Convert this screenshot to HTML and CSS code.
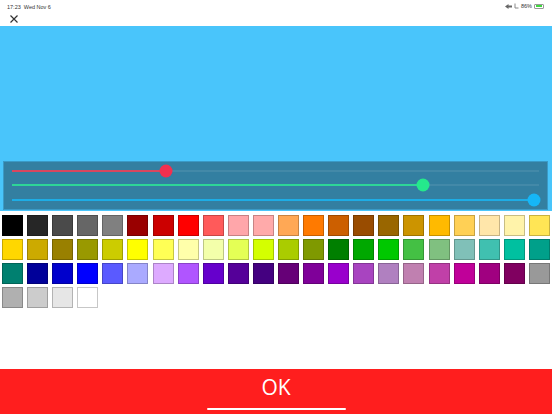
FILE: index.html
```
<!DOCTYPE html>
<html>
<head>
<meta charset="utf-8">
<link rel="stylesheet" href="styles.css">
</head>
<body>
<div class="app">
  <div class="status">
    <span class="time">17:23&nbsp;&nbsp;Wed Nov 6</span>
    <span class="sys">
      <svg class="ico" width="7" height="5" viewBox="0 0 7 5"><path d="M0 2.5 L3.5 0 L3.5 5 Z M3.5 1.5 H7 V3.5 H3.5Z" fill="#666"/></svg>
      <svg class="ico" width="5" height="6" viewBox="0 0 5 6"><path d="M1 0.5 V5 H4.5" fill="none" stroke="#888" stroke-width="1"/></svg>
      <span class="pct">86%</span>
      <span class="batt"><span class="battfill"></span></span>
    </span>
  </div>
  <div class="navrow">
    <svg class="close" width="8" height="8" viewBox="0 0 8 8"><path d="M0.5 0.5 L7.5 7.5 M7.5 0.5 L0.5 7.5" stroke="#333" stroke-width="1.2"/></svg>
  </div>
  <div class="preview">
    <div class="panel">
      <div class="slider red"><div class="track"><div class="fill" style="width:29.2%"></div><div class="thumb" style="left:29.2%"></div></div></div>
      <div class="slider green"><div class="track"><div class="fill" style="width:78%"></div><div class="thumb" style="left:78%"></div></div></div>
      <div class="slider blue"><div class="track"><div class="fill" style="width:99%"></div><div class="thumb" style="left:99%"></div></div></div>
    </div>
  </div>
  <div class="grid" id="grid"></div>
  <div class="spacer"></div>
  <div class="ok">
    <span class="oktext">OK</span>
    <span class="home"></span>
  </div>
</div>
<script>
var colors = [
"#000000","#262626","#4a4a4a","#666666","#808080","#990000","#cc0000","#ff0000","#ff5a5a","#ffa6aa","#ffaaaa","#ffa855","#ff7a00","#cc5f00","#994c00","#996600","#cc9400","#ffba00","#ffd055","#ffe6aa","#fff3aa","#ffe555",
"#ffd700","#ccaa00","#998000","#999900","#cccc00","#ffff00","#ffff55","#ffffaa","#f3ffaa","#e4ff55","#d4ff00","#aacc00","#7f9900","#007f00","#00a800","#00c800","#44c044","#80c080","#80c0b8","#40c0b0","#00c0a0","#00a08a",
"#008070","#000099","#0000cc","#0000ff","#5a5aff","#aaaaff","#ddaaff","#b055ff","#6600cc","#550099","#440080","#660077","#7f0099","#9900cc","#a844c0","#b080c0","#c080b0","#c040a8","#c00099","#a00080","#800060","#999999",
"#b0b0b0","#cccccc","#e6e6e6","#ffffff"];
var g = document.getElementById('grid');
colors.forEach(function(c){
  var d = document.createElement('div');
  d.className = 'cell';
  var s = document.createElement('div');
  s.className = 'sw';
  s.style.background = c;
  d.appendChild(s);
  g.appendChild(d);
});
</script>
</body>
</html>
```
FILE: styles.css
```
* { box-sizing: border-box; }
html, body { margin: 0; padding: 0; }
body { font-family: "Liberation Sans", Arial, sans-serif; background: #fff; }
.app { width: 552px; height: 414px; display: flex; flex-direction: column; overflow: hidden; }
.status { height: 12px; display: flex; justify-content: space-between; align-items: center; padding: 0 8px 0 7px; font-size: 5.5px; color: #333; }
.time { padding-top: 1px; }
.sys { display: flex; align-items: center; gap: 2px; }
.ico { display: block; }
.pct { color: #333; }
.batt { width: 10px; height: 5px; border: 0.8px solid #999; border-radius: 1px; padding: 0.5px; display: flex; }
.battfill { width: 86%; background: #3fd63f; }
.navrow { height: 14px; display: flex; align-items: center; padding-left: 10px; }
.close { display: block; margin-top: 0px; }
.preview { height: 185px; background: #49c5fb; display: flex; flex-direction: column; justify-content: flex-end; padding: 0 4px 1px 3px; }
.panel { height: 49px; background: #337fa1; border: 1px solid #3a9ac6; padding: 2px 8px 2px 8px; display: flex; flex-direction: column; }
.slider { height: 15px; display: flex; align-items: center; }
.track { position: relative; width: 100%; height: 2px; background: rgba(255,255,255,0.08); }
.fill { height: 2px; }
.thumb { position: absolute; top: 50%; width: 13px; height: 13px; border-radius: 50%; transform: translate(-50%, -50%); }
.red .thumb { background: #f2304f; }
.red .fill { background: #d8475f; }
.green .thumb { background: #25e88c; }
.green .fill { background: #2ed597; }
.blue .thumb { background: #16b6f7; }
.blue .fill { background: #1dade6; }
.grid { display: grid; grid-template-columns: repeat(22, 1fr); row-gap: 3px; padding-top: 4px; }
.cell { display: flex; justify-content: center; }
.sw { width: 21px; height: 21px; border: 1px solid rgba(0,0,0,0.22); }
.spacer { flex: 1; }
.ok { height: 45px; background: #ff1e1e; position: relative; display: flex; justify-content: center; align-items: center; }
.oktext { color: #fff; font-family: "Open Sans", "Liberation Sans", sans-serif; font-size: 21px; margin-top: -9px; }
.home { position: absolute; left: 207px; bottom: 4px; width: 139px; height: 2px; background: #fff; border-radius: 2px; }
```
